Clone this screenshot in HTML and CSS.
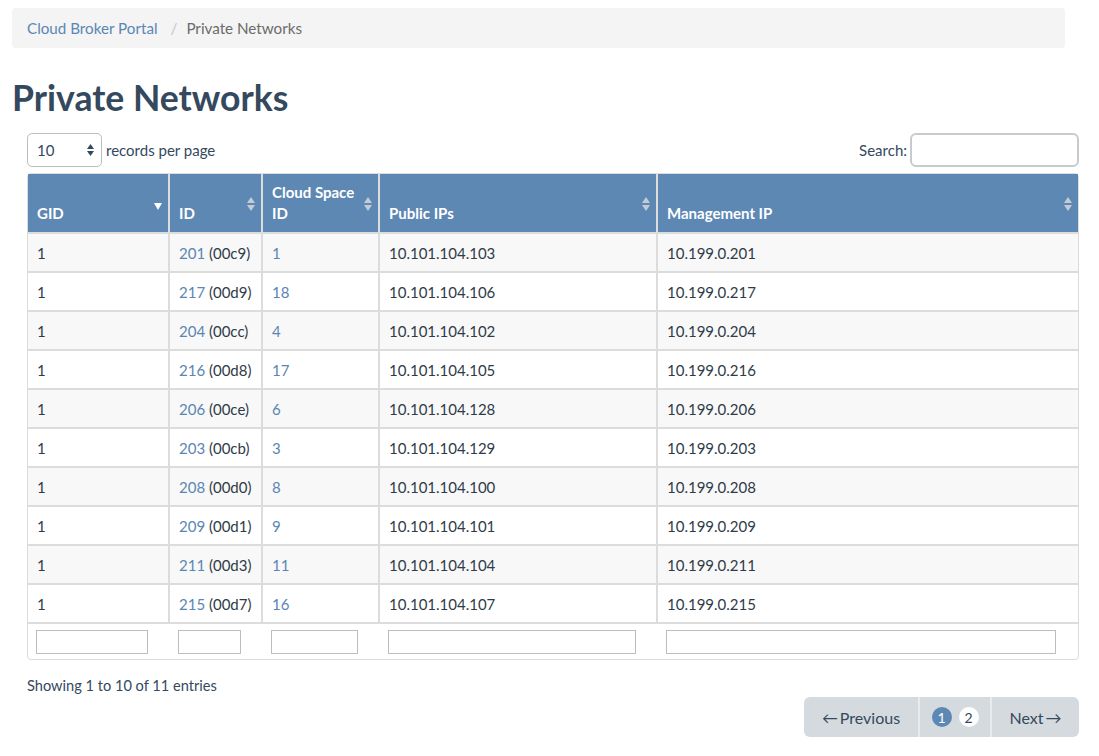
FILE: index.html
```html
<!DOCTYPE html>
<html>
<head>
<meta charset="utf-8">
<title>Private Networks</title>
<link rel="stylesheet" href="styles.css">
</head>
<body>
<div class="page">
  <nav class="breadcrumb">
    <a href="#" class="crumb-link">Cloud Broker Portal</a>
    <span class="crumb-sep">/</span>
    <span class="crumb-active">Private Networks</span>
  </nav>

  <h1 class="title">Private Networks</h1>

  <div class="dt-wrapper">
    <div class="dt-controls">
      <div class="length">
        <div class="select-box">
          <span>10</span>
          <svg class="select-arrows" width="7" height="12" viewBox="0 0 7 12"><polygon points="0,5 3.5,0 7,5" fill="#34495e"/><polygon points="0,7 7,7 3.5,12" fill="#34495e"/></svg>
        </div>
        <span class="length-label">records per page</span>
      </div>
      <div class="search">
        <label class="search-label">Search:</label>
        <input class="search-input" type="text">
      </div>
    </div>

    <table class="grid">
      <colgroup>
        <col class="c-gid"><col class="c-id"><col class="c-cs"><col class="c-pub"><col class="c-mgmt">
      </colgroup>
      <thead>
        <tr>
          <th><span class="th-text">GID</span><svg class="sort sort-desc" width="8" height="7" viewBox="0 0 8 7"><polygon points="0,0 8,0 4,7" fill="#ffffff"/></svg></th>
          <th><span class="th-text">ID</span><svg class="sort" width="8" height="14" viewBox="0 0 8 14"><polygon points="0,6 4,0 8,6" fill="#c3ccd6"/><polygon points="0,8 8,8 4,14" fill="#c3ccd6"/></svg></th>
          <th><span class="th-text">Cloud Space ID</span><svg class="sort" width="8" height="14" viewBox="0 0 8 14"><polygon points="0,6 4,0 8,6" fill="#c3ccd6"/><polygon points="0,8 8,8 4,14" fill="#c3ccd6"/></svg></th>
          <th><span class="th-text">Public IPs</span><svg class="sort" width="8" height="14" viewBox="0 0 8 14"><polygon points="0,6 4,0 8,6" fill="#c3ccd6"/><polygon points="0,8 8,8 4,14" fill="#c3ccd6"/></svg></th>
          <th><span class="th-text">Management IP</span><svg class="sort" width="8" height="14" viewBox="0 0 8 14"><polygon points="0,6 4,0 8,6" fill="#c3ccd6"/><polygon points="0,8 8,8 4,14" fill="#c3ccd6"/></svg></th>
        </tr>
      </thead>
      <tbody>
        <tr><td>1</td><td><a href="#">201</a> (00c9)</td><td><a href="#">1</a></td><td>10.101.104.103</td><td>10.199.0.201</td></tr>
        <tr><td>1</td><td><a href="#">217</a> (00d9)</td><td><a href="#">18</a></td><td>10.101.104.106</td><td>10.199.0.217</td></tr>
        <tr><td>1</td><td><a href="#">204</a> (00cc)</td><td><a href="#">4</a></td><td>10.101.104.102</td><td>10.199.0.204</td></tr>
        <tr><td>1</td><td><a href="#">216</a> (00d8)</td><td><a href="#">17</a></td><td>10.101.104.105</td><td>10.199.0.216</td></tr>
        <tr><td>1</td><td><a href="#">206</a> (00ce)</td><td><a href="#">6</a></td><td>10.101.104.128</td><td>10.199.0.206</td></tr>
        <tr><td>1</td><td><a href="#">203</a> (00cb)</td><td><a href="#">3</a></td><td>10.101.104.129</td><td>10.199.0.203</td></tr>
        <tr><td>1</td><td><a href="#">208</a> (00d0)</td><td><a href="#">8</a></td><td>10.101.104.100</td><td>10.199.0.208</td></tr>
        <tr><td>1</td><td><a href="#">209</a> (00d1)</td><td><a href="#">9</a></td><td>10.101.104.101</td><td>10.199.0.209</td></tr>
        <tr><td>1</td><td><a href="#">211</a> (00d3)</td><td><a href="#">11</a></td><td>10.101.104.104</td><td>10.199.0.211</td></tr>
        <tr><td>1</td><td><a href="#">215</a> (00d7)</td><td><a href="#">16</a></td><td>10.101.104.107</td><td>10.199.0.215</td></tr>
      </tbody>
      <tfoot>
        <tr>
          <td><input class="filter" type="text"></td>
          <td><input class="filter" type="text"></td>
          <td><input class="filter" type="text"></td>
          <td><input class="filter" type="text"></td>
          <td><input class="filter" type="text"></td>
        </tr>
      </tfoot>
    </table>

    <div class="info">Showing 1 to 10 of 11 entries</div>

    <div class="pager-row">
      <div class="pager">
        <a href="#" class="pg pg-prev">&larr;&thinsp;Previous</a>
        <span class="pg pg-pages"><span class="page-dot active">1</span><span class="page-dot">2</span></span>
        <a href="#" class="pg pg-next">Next&thinsp;&rarr;</a>
      </div>
    </div>
  </div>
</div>
</body>
</html>
```

FILE: styles.css
```css
* { box-sizing: border-box; }

body {
  margin: 0;
  font-family: Lato, "Open Sans", "Liberation Sans", sans-serif;
  font-size: 15px;
  color: #34495e;
  background: #ffffff;
}

a { color: #5a86b3; text-decoration: none; }

.page {
  padding: 8px 20px 0 12px;
}

.breadcrumb {
  display: flex;
  align-items: center;
  height: 40px;
  margin-right: 14px;
  padding: 0 15px;
  background: #f4f4f4;
  border-radius: 4px;
  font-size: 15.2px;
}

.crumb-link { color: #5a86b3; }
.crumb-sep { color: #c4c4c4; padding: 0 9px 0 13px; }
.crumb-active { color: #6b6b6b; }

.title {
  margin: 31px 0 0 0;
  font-size: 35.6px;
  line-height: 37px;
  font-weight: 700;
  color: #34495e;
}

.dt-wrapper {
  margin-top: 17px;
  margin-left: 15px;
}

.dt-controls {
  display: flex;
  justify-content: space-between;
  align-items: center;
  height: 34px;
}

.length {
  display: flex;
  align-items: center;
}

.select-box {
  display: flex;
  align-items: center;
  justify-content: space-between;
  width: 75px;
  height: 34px;
  padding: 0 7px 0 9px;
  border: 1px solid #b9bec3;
  border-radius: 5px;
  font-size: 15px;
  color: #34495e;
}

.length-label {
  margin-left: 4px;
  font-size: 15px;
}

.search {
  display: flex;
  align-items: center;
}

.search-label {
  font-size: 15px;
  margin-right: 3px;
}

.search-input {
  width: 169px;
  height: 34px;
  border: 2px solid #c7cbcf;
  border-radius: 6px;
  background: #fff;
}

.grid {
  margin-top: 6px;
  width: 1052px;
  table-layout: fixed;
  border-collapse: separate;
  border-spacing: 0;
  border: 1px solid #dcdcdc;
  border-radius: 4px;
  font-size: 15px;
}

.c-gid { width: 142px; }
.c-id { width: 93px; }
.c-cs { width: 117px; }
.c-pub { width: 278px; }
.c-mgmt { width: 420px; }

.grid th {
  position: relative;
  height: 60px;
  padding: 0 22px 8px 9px;
  background: #5d88b3;
  color: #ffffff;
  font-size: 15px;
  font-weight: 700;
  line-height: 21px;
  text-align: left;
  vertical-align: bottom;
  border-right: 2px solid #dcdcdc;
  border-bottom: 2px solid #dcdcdc;
}

.grid th:last-child { border-right: 0; }

.sort {
  position: absolute;
  right: 6px;
  top: 23px;
}

.sort-desc { top: 29px; }

.grid tbody td {
  height: 39px;
  padding: 0 9px;
  border-right: 2px solid #dcdcdc;
  border-bottom: 2px solid #dcdcdc;
  color: #2f3b47;
  vertical-align: middle;
  white-space: nowrap;
}

.grid tbody td:last-child { border-right: 0; }

.grid tbody tr:nth-child(odd) td { background: #f8f8f8; }

.grid tfoot td {
  padding: 5px 22px 5px 8px;
  height: 35px;
}

.filter {
  display: block;
  width: 100%;
  height: 24px;
  border: 1px solid #bdbdbd;
  background: #fff;
}

.info {
  margin-top: 17px;
  font-size: 14.6px;
  color: #34495e;
}

.pager-row {
  display: flex;
  justify-content: flex-end;
  margin-top: 3px;
}

.pager {
  display: flex;
  height: 40px;
  background: #d5dadf;
  border-radius: 6px;
  overflow: hidden;
}

.pg {
  display: flex;
  align-items: center;
  justify-content: center;
  color: #34495e;
  font-size: 16px;
}

.pg-prev { width: 116px; border-right: 2px solid #e8ebee; }
.pg-pages { width: 72px; border-right: 2px solid #e8ebee; gap: 7px; }
.pg-next { width: 87px; }

.page-dot {
  display: flex;
  align-items: center;
  justify-content: center;
  width: 20px;
  height: 20px;
  border-radius: 50%;
  background: #ffffff;
  color: #34495e;
  font-size: 14px;
}

.page-dot.active {
  background: #5d88b3;
  color: #ffffff;
}
```
